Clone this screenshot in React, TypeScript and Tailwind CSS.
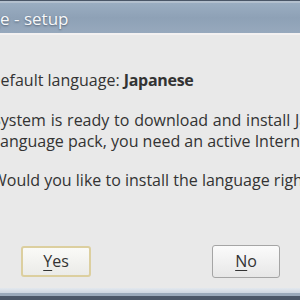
import React from "react";

export default function App() {
  const font = { fontFamily: '"Open Sans", "DejaVu Sans", sans-serif' };
  return (
    <div
      className="w-[300px] h-[300px] overflow-hidden bg-[#e9e9e9] flex flex-col"
      style={font}
    >
      {/* Title bar */}
      <div className="h-[35px] shrink-0 flex flex-col">
        <div className="h-px bg-[#4a5667]" />
        <div className="h-[2px] bg-[#b3c0ce]" />
        <div className="h-[30px] bg-gradient-to-b from-[#9aadc1] via-[#8ea1b6] to-[#97a9bd] flex items-start pt-[6px] overflow-hidden">
          <span className="whitespace-nowrap ml-[-67px] text-[17px] leading-[20px] text-[#f7f8fa] [text-shadow:0_1px_2px_rgba(30,40,55,0.55)]">
            Language - setup
          </span>
        </div>
        <div className="h-[2px] bg-[#f3f1f1]" />
      </div>

      {/* Body */}
      <div className="flex-1 flex flex-col pt-[35px] text-[16px] leading-[21px] text-[#333333]">
        <p className="whitespace-nowrap ml-[-11px]">
          Default language: <span className="font-bold tracking-[-0.3px]">Japanese</span>
        </p>
        <p className="flex flex-col whitespace-nowrap mt-[19px]">
          <span className="ml-[-8px] [word-spacing:0.6px]">System is ready to download and install Japanese</span>
          <span className="ml-[-4px]">language pack, you need an active Internet connection.</span>
        </p>
        <p className="whitespace-nowrap ml-[-8px] mt-[18px]">
          Would you like to install the language right now?
        </p>

        <div className="flex items-center mt-[54px] ml-[21px]">
          <button className="w-[70px] h-[31px] rounded-[3px] border-[2px] border-[#dccf9f] bg-gradient-to-b from-[#fafaf7] to-[#ebebe8] flex items-center justify-center text-[16px] font-medium text-[#333]">
            <span>
              <span className="underline underline-offset-[3px]">Y</span>es
            </span>
          </button>
          <button className="ml-[121px] w-[68px] h-[33px] rounded-[3px] border border-[#a5a5a5] bg-gradient-to-b from-[#fbfbfb] to-[#e7e7e7] flex items-center justify-center text-[16px] font-medium text-[#333]">
            <span>
              <span className="underline underline-offset-[3px]">N</span>o
            </span>
          </button>
        </div>
      </div>

      {/* Bottom frame */}
      <div className="h-[12px] shrink-0 flex flex-col">
        <div className="h-[5px] bg-gradient-to-b from-[#e3e8ee] to-[#cdd6e0]" />
        <div className="h-[3px] bg-[#9aa9ba]" />
        <div className="h-[4px] bg-[#4b5768]" />
      </div>
    </div>
  );
}
